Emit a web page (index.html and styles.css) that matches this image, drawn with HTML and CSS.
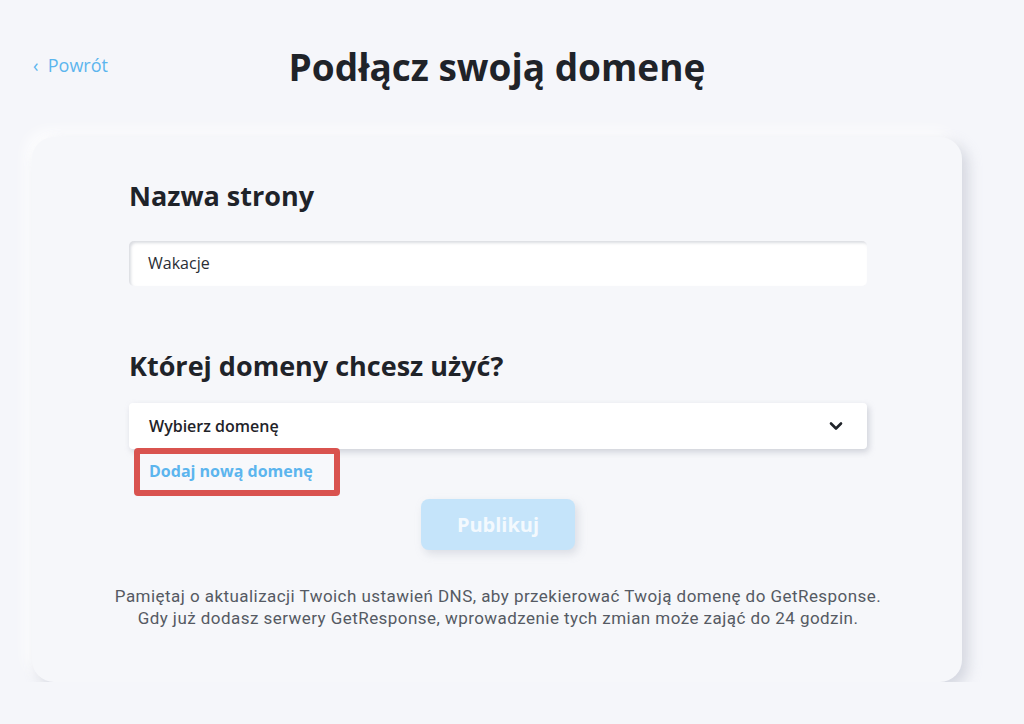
FILE: index.html
```html
<!DOCTYPE html>
<html lang="pl">
<head>
    <meta charset="UTF-8">
    <title>Podłącz swoją domenę</title>
    <link rel="stylesheet" href="styles.css">
</head>
<body>

<div class="page">
    <div class="top">
        <a class="back" href="#">&lsaquo;&nbsp; Powrót</a>
        <h1>Podłącz swoją domenę</h1>
    </div>

    <div class="card">
        <h2>Nazwa strony</h2>
        <div class="input">Wakacje</div>

        <h2 class="second">Której domeny chcesz użyć?</h2>
        <div class="select">
            <span>Wybierz domenę</span>
            <svg width="14" height="10" viewBox="0 0 14 10"><path d="M2 2.5 L7 7.5 L12 2.5" fill="none" stroke="#1f2329" stroke-width="2.6" stroke-linecap="round" stroke-linejoin="round"/></svg>
        </div>
        <div class="add">
            <a href="#">Dodaj nową domenę</a>
        </div>

        <div class="actions">
            <button type="button" disabled>Publikuj</button>
        </div>

        <p class="note">Pamiętaj o aktualizacji Twoich ustawień DNS, aby przekierować Twoją domenę do GetResponse.<br>Gdy już dodasz serwery GetResponse, wprowadzenie tych zmian może zająć do 24 godzin.</p>
    </div>
</div>

</body>
</html>
```

FILE: styles.css
```css
body {
    margin: 0;
    background: #f5f6fa;
    font-family: "Open Sans", "Noto Sans", sans-serif;
    color: #23272e;
}
.page {
    width: 930px;
    padding: 0 0 0 32px;
}
.top {
    position: relative;
    height: 137px;
}
.back {
    position: absolute;
    left: 1px;
    top: 53px;
    color: #5cb5ee;
    text-decoration: none;
    font-size: 18px;
}
h1 {
    margin: 0;
    padding-top: 41px;
    text-align: center;
    font-size: 37px;
    font-weight: 700;
    color: #1f2329;
}
.card {
    background: #f6f7fa;
    border-radius: 22px;
    box-shadow: 6px 6px 14px rgba(170, 175, 190, 0.45), -6px -6px 14px rgba(255, 255, 255, 0.9);
    padding: 40px 95px 50px 97px;
    height: 455px;
}
h2 {
    margin: 0;
    font-size: 27px;
    font-weight: 700;
    color: #1f2329;
}
.second {
    margin-top: 61px;
}
.input {
    margin-top: 27px;
    height: 45px;
    background: #fff;
    border-radius: 5px;
    box-shadow: inset 2px 2px 3px rgba(150, 155, 170, 0.35);
    padding: 0 19px;
    line-height: 45px;
    font-size: 16px;
    color: #2a2e35;
}
.select {
    margin-top: 19px;
    height: 46px;
    background: #fff;
    border-radius: 4px;
    box-shadow: 2px 3px 6px rgba(150, 155, 170, 0.4);
    padding: 0 24px 0 20px;
    display: flex;
    align-items: center;
    justify-content: space-between;
    font-size: 16px;
    font-weight: 600;
    color: #1f2329;
}
.add {
    margin: -1px 0 0 5px;
    display: inline-block;
    border: 6px solid #d9534f;
    border-radius: 4px;
    background: #f7f8fb;
    padding: 6px 21px 8px 9px;
}
.add a {
    color: #5cb5ee;
    font-size: 16px;
    font-weight: 700;
    text-decoration: none;
}
.actions {
    display: flex;
    justify-content: center;
    margin-top: 3px;
}
button {
    width: 154px;
    height: 51px;
    border: none;
    border-radius: 8px;
    background: #c5e4fa;
    color: #f3f9fe;
    font-family: inherit;
    font-size: 20px;
    font-weight: 700;
    box-shadow: 3px 4px 8px rgba(170, 175, 190, 0.35);
}
.note {
    margin: 35px -70px 0;
    text-align: center;
    white-space: nowrap;
    font-family: Roboto, sans-serif;
    font-size: 17px;
    line-height: 22px;
    color: #555a63;
    letter-spacing: 0.45px;
}
```
